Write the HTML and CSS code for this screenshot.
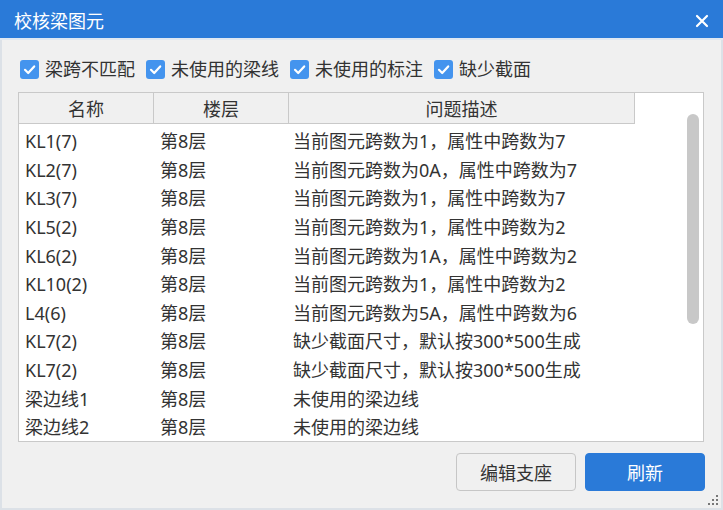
FILE: index.html
```html
<!DOCTYPE html>
<html lang="zh-CN">
<head>
    <meta charset="UTF-8">
    <title>校核梁图元</title>
    <link rel="stylesheet" href="styles.css">
</head>
<body>
    <div class="window">
        <div class="titlebar">
            <span class="title">校核梁图元</span>
            <svg class="close" width="14" height="14" viewBox="0 0 14 14">
                <path d="M2 2 L12 12 M12 2 L2 12" stroke="#fff" stroke-width="2.2" stroke-linecap="round"/>
            </svg>
        </div>

        <div class="content">
            <div class="filters">
                <label class="check"><span class="box"><svg width="19" height="19" viewBox="0 0 19 19"><path d="M5 9.8 L8.2 13 L14.2 6.4" fill="none" stroke="#fff" stroke-width="2.2" stroke-linecap="round" stroke-linejoin="round"/></svg></span>梁跨不匹配</label>
                <label class="check"><span class="box"><svg width="19" height="19" viewBox="0 0 19 19"><path d="M5 9.8 L8.2 13 L14.2 6.4" fill="none" stroke="#fff" stroke-width="2.2" stroke-linecap="round" stroke-linejoin="round"/></svg></span>未使用的梁线</label>
                <label class="check"><span class="box"><svg width="19" height="19" viewBox="0 0 19 19"><path d="M5 9.8 L8.2 13 L14.2 6.4" fill="none" stroke="#fff" stroke-width="2.2" stroke-linecap="round" stroke-linejoin="round"/></svg></span>未使用的标注</label>
                <label class="check"><span class="box"><svg width="19" height="19" viewBox="0 0 19 19"><path d="M5 9.8 L8.2 13 L14.2 6.4" fill="none" stroke="#fff" stroke-width="2.2" stroke-linecap="round" stroke-linejoin="round"/></svg></span>缺少截面</label>
            </div>

            <div class="grid">
                <div class="grid-head">
                    <div class="th col-name">名称</div>
                    <div class="th col-floor">楼层</div>
                    <div class="th col-desc">问题描述</div>
                </div>
                <div class="grid-body">
                    <div class="row"><div class="td col-name">KL1(7)</div><div class="td col-floor">第8层</div><div class="td col-desc">当前图元跨数为1，属性中跨数为7</div></div>
                    <div class="row"><div class="td col-name">KL2(7)</div><div class="td col-floor">第8层</div><div class="td col-desc">当前图元跨数为0A，属性中跨数为7</div></div>
                    <div class="row"><div class="td col-name">KL3(7)</div><div class="td col-floor">第8层</div><div class="td col-desc">当前图元跨数为1，属性中跨数为7</div></div>
                    <div class="row"><div class="td col-name">KL5(2)</div><div class="td col-floor">第8层</div><div class="td col-desc">当前图元跨数为1，属性中跨数为2</div></div>
                    <div class="row"><div class="td col-name">KL6(2)</div><div class="td col-floor">第8层</div><div class="td col-desc">当前图元跨数为1A，属性中跨数为2</div></div>
                    <div class="row"><div class="td col-name">KL10(2)</div><div class="td col-floor">第8层</div><div class="td col-desc">当前图元跨数为1，属性中跨数为2</div></div>
                    <div class="row"><div class="td col-name">L4(6)</div><div class="td col-floor">第8层</div><div class="td col-desc">当前图元跨数为5A，属性中跨数为6</div></div>
                    <div class="row"><div class="td col-name">KL7(2)</div><div class="td col-floor">第8层</div><div class="td col-desc">缺少截面尺寸，默认按300*500生成</div></div>
                    <div class="row"><div class="td col-name">KL7(2)</div><div class="td col-floor">第8层</div><div class="td col-desc">缺少截面尺寸，默认按300*500生成</div></div>
                    <div class="row"><div class="td col-name">梁边线1</div><div class="td col-floor">第8层</div><div class="td col-desc">未使用的梁边线</div></div>
                    <div class="row"><div class="td col-name">梁边线2</div><div class="td col-floor">第8层</div><div class="td col-desc">未使用的梁边线</div></div>
                </div>
                <div class="scrollbar"></div>
            </div>

            <div class="actions">
                <button class="btn">编辑支座</button>
                <button class="btn primary">刷新</button>
            </div>
        </div>

        <svg class="grip" width="12" height="12" viewBox="0 0 12 12">
            <rect x="9" y="1" width="2" height="2" fill="#777"/>
            <rect x="5" y="5" width="2" height="2" fill="#777"/>
            <rect x="9" y="5" width="2" height="2" fill="#777"/>
            <rect x="1" y="9" width="2" height="2" fill="#777"/>
            <rect x="5" y="9" width="2" height="2" fill="#777"/>
            <rect x="9" y="9" width="2" height="2" fill="#777"/>
        </svg>
    </div>
</body>
</html>
```

FILE: styles.css
```css
body {
    margin: 0;
    background: #fff;
    font-family: 'Noto Sans', 'Noto Sans CJK SC', sans-serif;
    font-size: 18px;
    color: #333;
}
.window {
    position: relative;
    width: 723px;
    height: 510px;
    box-sizing: border-box;
    background: #f0f0f0;
    border-left: 2px solid #dce1e7;
    border-right: 2px solid #dce1e7;
    border-bottom: 2px solid #dce1e7;
}
.titlebar {
    height: 38px;
    margin-left: -2px;
    margin-right: -2px;
    background: #2a7ad8;
    border-bottom: 2px solid #dfe8f2;
    display: flex;
    align-items: center;
    justify-content: space-between;
    padding: 0 14px;
}
.title {
    color: #fff;
    font-size: 18px;
    line-height: 1;
    padding-top: 3px;
}
.close {
    margin-top: 3px;
}
.content {
    padding: 15px 16px 0 16px;
}
.filters {
    display: flex;
    align-items: center;
    height: 28px;
    padding-left: 2px;
    margin-bottom: 9px;
}
.check {
    display: flex;
    align-items: center;
    margin-right: 11px;
    line-height: 1;
}
.box {
    width: 19px;
    height: 19px;
    border-radius: 3px;
    background: #4494ee;
    margin-right: 6px;
    display: flex;
}
.grid {
    position: relative;
    height: 350px;
    box-sizing: border-box;
    background: #fff;
    border: 1px solid #c9c9c9;
    margin-right: 1px;
}
.grid-head {
    display: flex;
    height: 31px;
}
.th {
    box-sizing: border-box;
    background: #f0f0f0;
    border-right: 1px solid #c9c9c9;
    border-bottom: 1px solid #c9c9c9;
    display: flex;
    align-items: center;
    justify-content: center;
    line-height: 1;
    padding-top: 2px;
}
.col-name {
    width: 135px;
}
.col-floor {
    width: 135px;
}
.col-desc {
    width: 346px;
}
.row {
    display: flex;
    height: 28.6px;
    align-items: center;
}
.td {
    box-sizing: border-box;
    padding-left: 6px;
    padding-top: 6px;
    white-space: nowrap;
    line-height: 1;
}
.td.col-desc {
    padding-left: 4px;
}
.scrollbar {
    position: absolute;
    left: 668px;
    top: 21px;
    width: 12px;
    height: 210px;
    border-radius: 6px;
    background: #c8c8c8;
}
.actions {
    display: flex;
    justify-content: flex-end;
    gap: 9px;
    margin-top: 11px;
}
.btn {
    width: 120px;
    height: 38px;
    border: 1px solid #c6c6c6;
    border-radius: 4px;
    background: #f0f0f0;
    color: #333;
    font-family: inherit;
    font-size: 18px;
    padding: 0;
}
.btn.primary {
    background: #2a7ad8;
    border-color: #2a7ad8;
    color: #fff;
}
.grip {
    position: absolute;
    right: 2px;
    bottom: 2px;
}
```
